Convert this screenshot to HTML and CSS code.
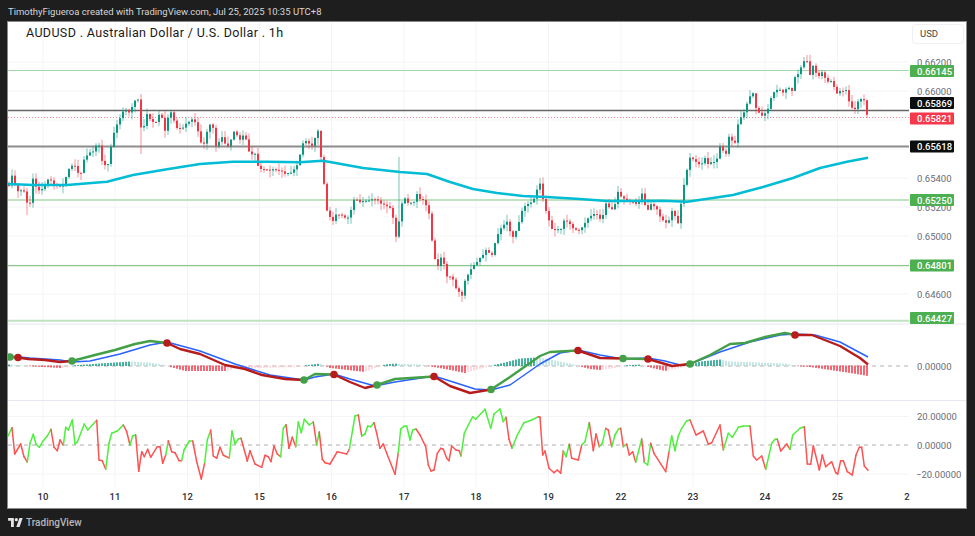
FILE: index.html
```html
<!DOCTYPE html>
<html lang="en">
<head>
    <meta charset="UTF-8">
    <meta name="viewport" content="width=device-width, initial-scale=1.0">
    <title>AUDUSD chart</title>
    <link rel="stylesheet" href="styles.css">
</head>
<body>
    <header class="top-bar">TimothyFigueroa created with TradingView.com, Jul 25, 2025 10:35 UTC+8</header>

    <main class="chart-frame">
        <!-- viewBox uses page coordinates, so numbers read straight off the screenshot -->
        <svg class="chart" viewBox="8 22 958 486" xmlns="http://www.w3.org/2000/svg">
            <g id="grid" class="grid"></g>

            <line class="sep" x1="8" y1="324" x2="966" y2="324"></line>
            <line class="sep" x1="8" y1="400.5" x2="966" y2="400.5"></line>

            <line class="level level-thin" x1="8" y1="70.5" x2="909" y2="70.5"></line>
            <line class="level level-wide" x1="8" y1="200" x2="909" y2="200"></line>
            <line class="level level-dark" x1="8" y1="265.7" x2="909" y2="265.7"></line>
            <line class="level level-wide" x1="8" y1="320.7" x2="909" y2="320.7"></line>
            <line class="black-level" x1="8" y1="110.5" x2="909" y2="110.5"></line>
            <line class="black-level black-wide" x1="8" y1="146.5" x2="909" y2="146.5"></line>
            <line class="last-price" x1="8" y1="117.5" x2="909" y2="117.5"></line>

            <g id="candles"></g>
            <polyline id="ma" class="ma"></polyline>

            <line class="zero" x1="8" y1="366" x2="909" y2="366"></line>
            <g id="hist"></g>
            <polyline id="signal" class="signal"></polyline>
            <g id="macd"></g>

            <line class="zero" x1="8" y1="445" x2="909" y2="445"></line>
            <g id="osc"></g>

            <g class="axis-label">
                <text x="917" y="65.5">0.66200</text>
                <text x="917" y="94.5">0.66000</text>
                <text x="917" y="181.5">0.65400</text>
                <text x="917" y="210.5">0.65200</text>
                <text x="917" y="239.5">0.65000</text>
                <text x="917" y="297.5">0.64600</text>
                <text x="917" y="369.5">0.00000</text>
                <text x="917" y="420">20.00000</text>
                <text x="917" y="448.5">0.00000</text>
                <text x="916" y="477.5">−20.00000</text>
            </g>

            <g class="tag tag-green"><rect x="910" y="65" width="44" height="12"></rect><text x="917" y="74.5">0.66145</text></g>
            <g class="tag tag-black"><rect x="910" y="97" width="44" height="12"></rect><text x="917" y="106.5">0.65869</text></g>
            <g class="tag tag-red"><rect x="910" y="112.5" width="44" height="12"></rect><text x="917" y="122">0.65821</text></g>
            <g class="tag tag-black"><rect x="910" y="140.5" width="44" height="12"></rect><text x="917" y="150">0.65618</text></g>
            <g class="tag tag-green"><rect x="910" y="194" width="44" height="12"></rect><text x="917" y="203.5">0.65250</text></g>
            <g class="tag tag-green"><rect x="910" y="259.5" width="44" height="12"></rect><text x="917" y="269">0.64801</text></g>
            <g class="tag tag-green"><rect x="910" y="312" width="44" height="12"></rect><text x="917" y="321.5">0.64427</text></g>

            <g class="time-label">
                <text x="43" y="500">10</text>
                <text x="115" y="500">11</text>
                <text x="187.5" y="500">12</text>
                <text x="259.5" y="500">15</text>
                <text x="331.5" y="500">16</text>
                <text x="404" y="500">17</text>
                <text x="476" y="500">18</text>
                <text x="548.5" y="500">19</text>
                <text x="621" y="500">22</text>
                <text x="693" y="500">23</text>
                <text x="765" y="500">24</text>
                <text x="837.5" y="500">25</text>
                <text x="907" y="500">2</text>
            </g>
        </svg>

        <div class="chart-title">AUDUSD . Australian Dollar / U.S. Dollar . 1h</div>
        <div class="currency-btn">USD</div>
    </main>

    <footer class="bottom-bar">
        <svg class="tv-logo" viewBox="0 0 36 22" xmlns="http://www.w3.org/2000/svg">
            <path d="M14 22H7V7H0V0h14v22zM28 22h-8l7.500-22h8L28 22z"></path>
            <circle cx="20" cy="4" r="4"></circle>
        </svg>
        <span class="tv-name">TradingView</span>
    </footer>

    <script src="chart.js"></script>
</body>
</html>
```

FILE: styles.css
```css
* {
    margin: 0;
    padding: 0;
    box-sizing: border-box;
}

body {
    width: 975px;
    height: 536px;
    background: #1e1e1e;
    font-family: Roboto, "Liberation Sans", sans-serif;
    overflow: hidden;
    display: flex;
    flex-direction: column;
}

.top-bar {
    height: 22px;
    padding-left: 8px;
    color: #d6d6d6;
    font-size: 9.5px;
    line-height: 24px;
    white-space: nowrap;
}

.chart-frame {
    position: relative;
    width: 958px;
    height: 486px;
    margin-left: 8px;
    background: #fff;
    box-shadow: 0 0 0 1px #8a8a8a;
}

.chart {
    display: block;
    width: 958px;
    height: 486px;
}

.chart-title {
    position: absolute;
    left: 18px;
    top: 3px;
    font-size: 12.5px;
    line-height: 15px;
    letter-spacing: 0.35px;
    color: #1a1a1a;
    white-space: nowrap;
}

.currency-btn {
    position: absolute;
    left: 904px;
    top: 2px;
    width: 52px;
    height: 20px;
    padding-left: 7px;
    border: 1px solid #f0f0f3;
    border-radius: 4px;
    font-size: 9.5px;
    line-height: 18px;
    color: #444;
}

.bottom-bar {
    flex: 1;
    display: flex;
    align-items: center;
    gap: 3px;
    padding-left: 8px;
    padding-top: 1px;
}

.tv-logo {
    width: 15px;
    height: 9px;
    fill: #e4e4e4;
}

.tv-name {
    color: #b8b8b8;
    font-size: 10px;
    font-weight: 500;
}

.grid line {
    stroke: #f4f4f7;
    stroke-width: 1;
}

.sep {
    stroke: #e6e7f0;
    stroke-width: 1;
}

.level {
    stroke: #a5d6a7;
}

.level-thin {
    stroke-width: 1.2;
}

.level-wide {
    stroke: #bfe2c0;
    stroke-width: 2;
}

.level-dark {
    stroke: #8cc78e;
    stroke-width: 1.2;
}

.black-level {
    stroke: #666;
    stroke-width: 1.3;
}

.black-wide {
    stroke: #8c8c8c;
    stroke-width: 1.8;
}

.last-price {
    stroke: #f23645;
    stroke-width: 1;
    stroke-dasharray: 1 2;
    opacity: 0.6;
}

.ma {
    fill: none;
    stroke: #00bcd4;
    stroke-width: 2.5;
    stroke-linejoin: round;
}

.zero {
    stroke: #b0b0b0;
    stroke-width: 1;
    stroke-dasharray: 4 4;
}

.signal {
    fill: none;
    stroke: #2962ff;
    stroke-width: 1.5;
    stroke-linejoin: round;
}

.axis-label text {
    fill: #6a6d78;
    font-size: 9.5px;
}

.tag rect {
    rx: 1px;
}

.tag text {
    fill: #fff;
    font-size: 9.5px;
    font-weight: 500;
}

.tag-green rect {
    fill: #4caf50;
}

.tag-black rect {
    fill: #0b0e0e;
}

.tag-red rect {
    fill: #f7374b;
}

.time-label text {
    fill: #2a2e39;
    font-size: 9.5px;
    font-weight: 500;
    text-anchor: middle;
}
```

FILE: chart.js
```js
const SVG_NS = 'http://www.w3.org/2000/svg';

function add(parent, name, attrs) {
    const el = document.createElementNS(SVG_NS, name);
    for (const key in attrs) el.setAttribute(key, attrs[key]);
    parent.appendChild(el);
    return el;
}

// linear interpolation over [x, y] points
function valueAt(points, x) {
    if (x <= points[0][0]) return points[0][1];
    for (let i = 1; i < points.length; i++) {
        if (x <= points[i][0]) {
            const [x0, y0] = points[i - 1];
            const [x1, y1] = points[i];
            return y0 + (y1 - y0) * (x - x0) / (x1 - x0);
        }
    }
    return points[points.length - 1][1];
}

let seed = 17;
function rnd() {
    seed = (seed * 1103515245 + 12345) % 2147483648;
    return seed / 2147483648;
}

// grid
const grid = document.getElementById('grid');
[43, 115, 187.5, 259.5, 331.5, 404, 476, 548.5, 621, 693, 765, 837.5].forEach(x => {
    add(grid, 'line', { x1: x, y1: 22, x2: x, y2: 487 });
});
[62, 91, 120, 149, 178, 207, 236, 265, 294, 416.5, 474].forEach(y => {
    add(grid, 'line', { x1: 8, y1: y, x2: 909, y2: y });
});

// candles
const closes = [[9,185],[12,177],[17,190],[20,190],[25,193],[29,211],[33,180],[38,190],[43,190],[48,178],[58,187],[65,185],[67,170],[75,165],[80,178],[83,160],[93,150],[98,142],[102,160],[107,170],[111,147],[115,130],[120,117],[124,108],[130,115],[133,102],[138,100],[142,137],[147,113],[152,123],[157,123],[160,110],[165,132],[170,110],[177,127],[182,128],[188,122],[193,118],[198,132],[203,148],[208,127],[212,120],[215,147],[222,138],[230,150],[232,128],[240,140],[245,133],[248,152],[255,155],[257,167],[267,170],[277,170],[283,173],[293,172],[298,163],[304,140],[312,147],[318,132],[323,173],[326,207],
    [332,222],[337,212],[347,220],[355,198],[362,202],[372,198],[383,203],[392,210],[396,238],[398,227],[403,197],[412,205],[417,195],[425,202],[430,217],[433,250],[437,270],[442,253],[447,277],[452,277],[455,287],[462,297],[465,282],[472,268],[478,262],[487,250],[493,255],[495,242],[500,228],[507,223],[512,238],[518,227],[523,208],[532,203],[537,190],[541,183],[543,200],[548,218],[552,228],[560,230],[565,220],[575,230],[578,233],[588,218],[595,212],[602,220],[606,203],[613,212],[618,193],
    [625,198],[637,205],[642,195],[647,210],[653,203],[660,215],[665,223],[668,222],[673,210],[678,222],[682,197],[687,170],[690,157],[693,158],[700,165],[705,158],[708,163],[717,160],[720,147],[727,155],[729,138],[735,143],[738,123],[745,112],[748,100],[753,93],[757,112],[763,117],[768,108],[772,93],[777,89],[783,93],[788,88],[792,90],[795,78],[799,72],[803,63],[807,60],[810,75],[814,63],[817,78],[823,70],[827,83],[832,80],[835,92],[840,92],[847,90],[850,108],[856,108],[858,102],[862,98],[865,100],[866,113],[868,117]];
const longWicks = { 27: [0, 215], 141: [0, 154], 210: [126, 0], 399: [157, 0], 396: [0, 242], 462: [0, 302], 540: [178, 0], 804: [57, 0] };
const candles = document.getElementById('candles');
let open = closes[0][1];
for (let x = 9; x <= 868; x += 3) {
    const close = valueAt(closes, x) + (rnd() - 0.5) * 3;
    const color = close > open ? '#f23645' : '#089981';
    const top = Math.min(open, close);
    const bottom = Math.max(open, close);
    let high = top - rnd() * 7;
    let low = bottom + rnd() * 7;
    for (const key in longWicks) {
        if (Math.abs(key - x) < 2) {
            if (longWicks[key][0]) high = longWicks[key][0];
            if (longWicks[key][1]) low = longWicks[key][1];
        }
    }
    add(candles, 'line', { x1: x, y1: high, x2: x, y2: low, stroke: color, 'stroke-width': 1.2, opacity: 0.45 });
    add(candles, 'rect', { x: x - 1, y: top, width: 2, height: Math.max(bottom - top, 1), fill: color });
    open = close;
}

// moving average
const ma = [[8,184],[33,185],[67,185],[107,181.7],[133,175],[167,169.3],[200,164],[233,161.7],[267,161.7],[300,162.3],[322,160.7],[330,162],[363,168],[400,172],[427,174],[450,182],[473,189],[497,193],[523,196],[547,197],[580,199],[607,201],[630,201],[663,200.7],[687,201.7],[713,198],[733,195],[763,187],[793,178],[820,168],[847,161.7],[868,157.7]];
document.getElementById('ma').setAttribute('points', ma.join(' '));

// macd lines: the thick line flips colour at every cross dot
const signal = [[9,356],[30,358],[60,360],[72,362],[90,361],[120,354],[150,345],[167,342],[200,351],[235,364],[270,375],[304,380],[315,377],[334,374],[350,379],[375,386],[395,382],[434,376],[450,381],[475,389],[491,390],[510,385],[540,364],[560,353],[578,350],[600,355],[623,359],[648,358],[665,361],[680,365],[690,364],[720,352],[750,342],[780,335],[795,334],[815,335],[840,342],[868,357]];
document.getElementById('signal').setAttribute('points', signal.join(' '));

const macd = [
    ['#43a047', [[10,357],[18,357.5]]],
    ['#b71c1c', [[18,357.5],[28,359],[45,360],[60,362],[72,361]]],
    ['#43a047', [[72,361],[95,355],[115,350],[135,344],[150,341],[167,343]]],
    ['#b71c1c', [[167,343],[180,349],[200,354],[225,365],[245,369],[262,375],[285,379],[304,380]]],
    ['#43a047', [[304,380],[315,374],[334,374.5]]],
    ['#b71c1c', [[334,374.5],[350,382],[365,388],[377,385]]],
    ['#43a047', [[377,385],[395,379],[434,376.5]]],
    ['#b71c1c', [[434,376.5],[450,386],[470,393],[491,389.5]]],
    ['#43a047', [[491,389.5],[510,377],[540,356],[550,352],[578,350.5]]],
    ['#b71c1c', [[578,350.5],[600,358],[623,358.5]]],
    ['#43a047', [[623,358.5],[648,359]]],
    ['#b71c1c', [[648,359],[672,366],[690,364]]],
    ['#43a047', [[690,364],[710,355],[730,344],[745,343],[765,337],[785,333],[795,335]]],
    ['#b71c1c', [[795,335],[812,335],[840,346],[860,358],[868,364.5]]]
];
const macdGroup = document.getElementById('macd');
macd.forEach(([color, points]) => {
    add(macdGroup, 'polyline', { points: points.join(' '), fill: 'none', stroke: color, 'stroke-width': 2.4, 'stroke-linejoin': 'round' });
});
macd.forEach(([color, points]) => {
    add(macdGroup, 'circle', { cx: points[0][0], cy: points[0][1], r: 3.8, fill: color });
});

// histogram, bar height in px above the zero line
const histogram = [[9,1],[60,-2],[72,0],[100,2],[130,4],[150,3],[167,0],[185,-5],[225,-5],[235,-3],[260,-2],[300,-1],[304,0],[320,2],[330,-2],[365,-6],[375,-2],[385,1],[395,2],[420,1],[434,-1],[450,-4],[465,-7],[480,-3],[491,0],[505,3],[520,7],[535,8],[545,7],[555,5],[570,2],[578,0],[590,-3],[600,-4],[615,-2],[623,0],[640,1],[648,-1],[665,-5],[680,-2],[690,0],[700,4],[720,6],[730,4],[760,3],[785,2],[795,0],[810,-1],[830,-4],[850,-7],[868,-10]];
const histGroup = document.getElementById('hist');
let prev = 0;
for (let x = 9; x <= 868; x += 3) {
    const h = valueAt(histogram, x);
    const growing = Math.abs(h) >= Math.abs(prev);
    let color;
    if (h >= 0) color = growing ? '#089981' : '#b2dfdb';
    else color = growing ? '#f23645' : '#ffcdd2';
    add(histGroup, 'rect', { x: x - 0.75, y: h >= 0 ? 365.5 - h : 365.5, width: 1.5, height: Math.abs(h) + 0.5, fill: color });
    prev = h;
}

const osc = [[8,436],[12,427.7],[14.7,454],[20.7,444],[24,456.7],[27.3,462],[30,443.3],[33.3,434.3],[36,444.3],[39.3,447.3],[43.3,440.7],[47.3,436],[51,429.3],[54,447.3],[57.3,450.7],[60,440],[63.3,445.3],[65.7,427.3],[68.3,430],[72.3,420],[75,444],[77.3,442],[84.3,424],[87.7,430],[96.7,420.3],[99,460],[102.3,460.7],[105.7,469.3],[109,443.3],[111.7,433.3],[117.3,431],[123.3,425],[126.7,431.7],[130,445],[132.7,435.7],[135.7,435],[138.7,471.3],[141.7,451.7],[144.3,456.7],[147.7,449.3],[150.7,457.3],[157.3,446.7],[160,446.7],[162.7,463.3],[165.7,455],[168.3,440.7],[171.7,451.7],[175,452.7],[179,460.7],[181.7,460.7],[184,450],[189.3,441],[192.7,441],[196.7,461.7],[201.3,479],[204.7,462.7],[207.3,440],[210.7,430],[213.3,456],[216.7,458.3],[220,447.3],[223.3,455.3],[229.3,458],[232,431],[235,444],[238.3,439],[241,438.3],[247.3,461],[250,450.7],[255,464],[261.7,467.3],[265,455.3],[268.3,456.7],[271,461.7],[274,446],[277.3,454],[280.7,456.7],[283.3,428.3],[286,424.7],[289,448.3],[292.3,437.3],[295.7,446.7],[298.3,422],[301.3,432.7],[304.3,419.3],[309.3,425],[313.3,422],[316.7,445],[319.3,432],[322.3,459.3],[325,462.7],[330,464],
    [337.3,451.7],[346.7,454],[349.3,449.3],[355,416],[358.3,415],[361.7,436],[365,434],[367.7,426],[370.7,426.7],[374,422.7],[376.7,433.3],[380,448.3],[383.3,444],[386.7,453.3],[395,474.3],[398.3,452.7],[400.7,429],[404,426.3],[406.7,426],[410,440],[412.7,430],[416,429],[420,435],[425.7,446.7],[428.3,465],[431,471],[434,470],[437.3,453.3],[440.7,448.3],[443.3,449.3],[446.7,458.3],[449,460.7],[451.7,446],[456,450],[459.3,450.7],[461,456],[464.3,433.3],[468.3,425],[472.7,416.7],[475.7,419.3],[485,409.3],[490.7,428.3],[494,414],[500,409],[503.3,421.7],[506,417.3],[509,439.3],[512,448.3],[517.3,435],[524,422.7],[531.7,420],[538.3,416.7],[540,417.3],[542.7,455],[545,451],[549,468.3],[554,472.7],[557.3,470],[560.7,473.3],[563.3,450.7],[566,456.7],[569.3,444.3],[571.7,458.3],[578.3,460],[581.7,445],[585,441.7],[589.3,422.7],[593.3,450.7],[596,434],[599.3,446.7],[602.3,443.3],[605.7,428.3],[608.3,430],[611.7,446.7],[615,435],[618.3,429.3],[620.7,428.3],
    [623.3,446.7],[626.7,444],[629.3,455],[632.7,451.7],[635.7,462.3],[641.7,439],[644.3,462.3],[647.7,465],[650.7,443.3],[654,453.3],[665.7,471.7],[669,451.7],[671.7,436],[675,450.7],[678.3,436],[681.7,428.3],[686.7,420.7],[690,420],[696,435],[703.3,431],[708.3,444.3],[711.7,442.7],[720,425],[723.3,450],[728.3,433.3],[732.3,437.3],[738.3,427.3],[743.3,426],[750,426],[753.3,456],[756.7,460],[761.7,456],[765.7,469.3],[771.7,443.3],[775,439.3],[777.3,439.3],[780.7,451],[786.7,444],[790,449.3],[792.7,435],[800,428.3],[804.3,426.7],[807.3,464],[810.7,464.3],[813.3,445.7],[819.3,470],[822.3,455],[825.7,466.7],[831.7,461.7],[835.7,472.7],[837.7,474],[840.7,460.7],[843.3,460.7],[847.3,471.7],[852.3,475],[856,455],[859.3,447.3],[861.7,447.3],[864.3,466],[868,470.3]];
const greenRuns = [[8,12],[27.3,51],[63.3,96.7],[105.7,123.3],[130,135.7],[165.7,168.3],[181.7,192.7],[204.7,210.7],[229.3,241],[280.7,286],[295.7,313.3],[316.7,319.3],[349.3,358.3],[361.7,374],[398.3,416],[461,506],[512,538.3],[563.3,569.3],[581.7,589.3],[599.3,605.7],[611.7,620.7],[623.3,626.7],[635.7,641.7],[644.3,650.7],[669,690],[723.3,750],[765.7,777.3],[790,804.3]];
const oscGroup = document.getElementById('osc');
for (let i = 1; i < osc.length; i++) {
    const mid = (osc[i - 1][0] + osc[i][0]) / 2;
    const green = greenRuns.some(([a, b]) => mid >= a && mid <= b);
    add(oscGroup, 'line', {
        x1: osc[i - 1][0], y1: osc[i - 1][1], x2: osc[i][0], y2: osc[i][1],
        stroke: green ? '#4cf03c' : '#ff5252', 'stroke-width': 1.5, 'stroke-linecap': 'round'
    });
}
```
